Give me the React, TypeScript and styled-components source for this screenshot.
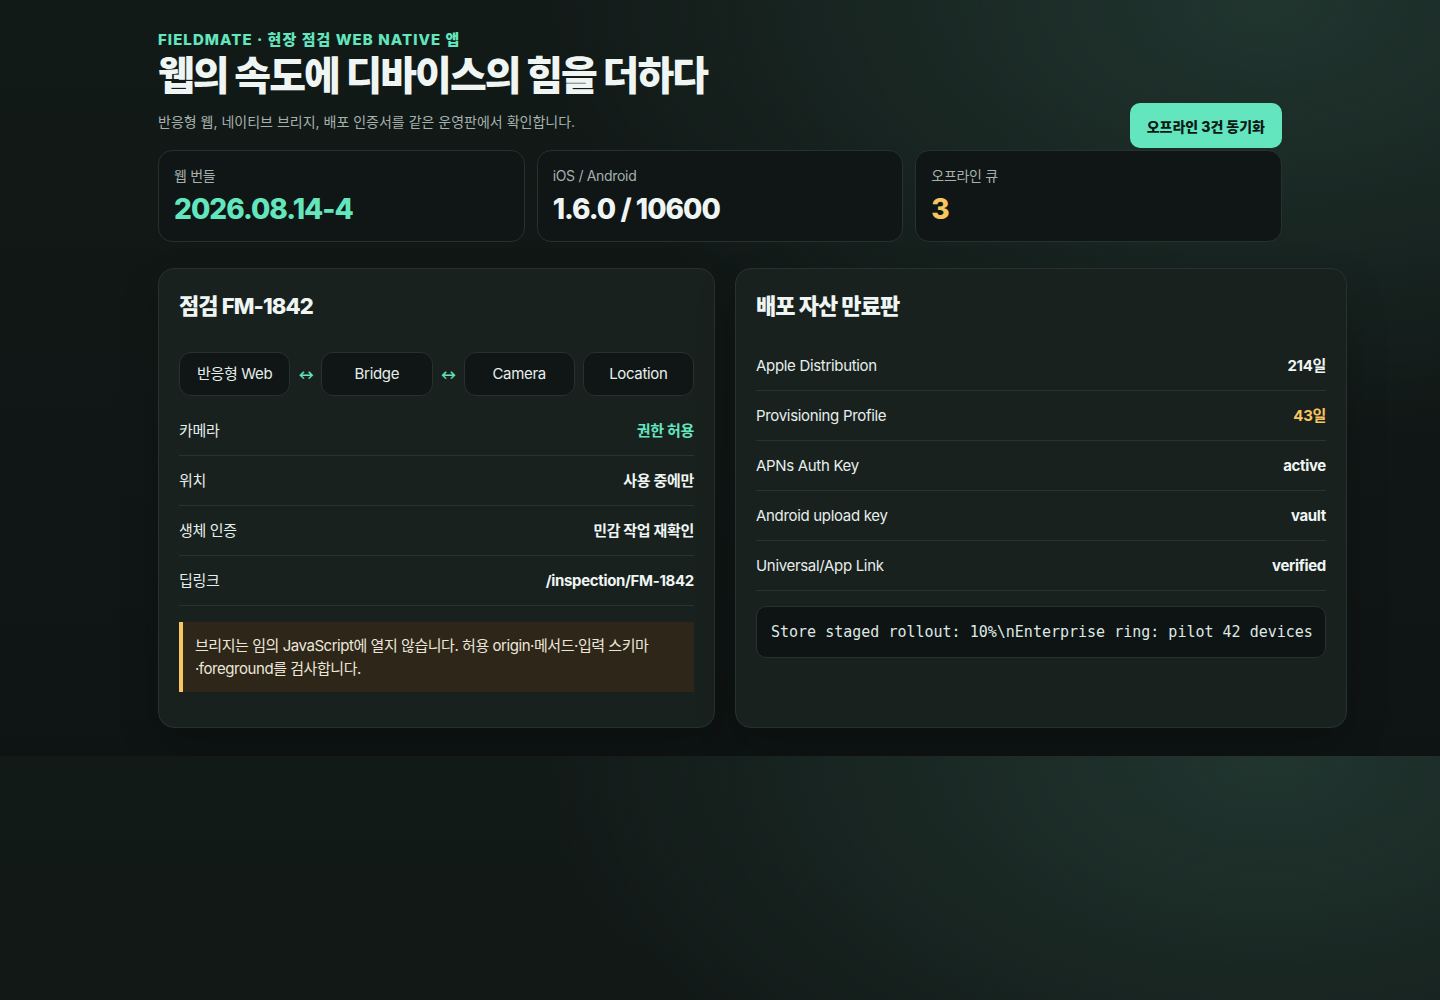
import React from 'react';
import styled, { createGlobalStyle } from 'styled-components';

const GlobalStyle = createGlobalStyle`
  body {
    margin: 0;
    background:
      radial-gradient(ellipse 1000px 620px at 88% 0%, #21352f 0%, rgba(33, 53, 47, 0) 72%),
      linear-gradient(180deg, #121a18 0%, #0e1413 100%);
    color: #e9f1ef;
    font-family: Inter, "Noto Sans CJK KR", sans-serif;
    letter-spacing: -0.02em;
  }
  * {
    box-sizing: border-box;
  }
`;

const Page = styled.div`
  max-width: 1124px;
  margin: 0 auto;
  padding: 30px 0 28px;
  display: flex;
  flex-direction: column;
`;

const Header = styled.header`
  display: flex;
  justify-content: space-between;
  align-items: flex-end;
`;

const Intro = styled.div`
  display: flex;
  flex-direction: column;
`;

const Eyebrow = styled.span`
  font-size: 15px;
  line-height: 20px;
  font-weight: 800;
  letter-spacing: 0.07em;
  color: #63e6be;
`;

const Title = styled.h1`
  margin: 3px 0 0;
  font-size: 40px;
  line-height: 46px;
  font-weight: 800;
  letter-spacing: -0.05em;
  color: #eef5f3;
`;

const Subtitle = styled.p`
  margin: 13px 0 16px;
  font-size: 14px;
  line-height: 20px;
  letter-spacing: 0;
  color: #a6b1ae;
`;

const SyncButton = styled.button`
  height: 45px;
  padding: 0 17px;
  border: none;
  border-radius: 10px;
  background: #63e6be;
  color: #0c1a16;
  font-family: inherit;
  font-size: 14px;
  font-weight: 800;
  letter-spacing: 0;
  cursor: pointer;
`;

const Stats = styled.section`
  margin-top: 2px;
  display: grid;
  grid-template-columns: repeat(3, 1fr);
  gap: 12px;
`;

const StatCard = styled.div`
  display: flex;
  flex-direction: column;
  gap: 6px;
  padding: 15px;
  border: 1px solid #27312f;
  border-radius: 14px;
  background: #0f1615;
`;

const StatLabel = styled.span`
  font-size: 14px;
  line-height: 20px;
  color: #a6b1ae;
`;

const StatValue = styled.span<{ $tone?: 'green' | 'yellow' }>`
  font-size: 28px;
  line-height: 34px;
  font-weight: 800;
  letter-spacing: -0.035em;
  color: ${({ $tone }) =>
    $tone === 'green' ? '#63e6be' : $tone === 'yellow' ? '#f7c65f' : '#eef5f3'};
`;

const Panels = styled.section`
  margin-top: 26px;
  display: grid;
  grid-template-columns: 557px 612px;
  gap: 20px;
  align-items: stretch;
`;

const Panel = styled.div`
  display: flex;
  flex-direction: column;
  padding: 20px 20px 35px;
  border: 1px solid #27322f;
  border-radius: 16px;
  background: #19211f;
  box-shadow: 0 18px 40px rgba(0, 0, 0, 0.18);
`;

const PanelTitle = styled.h2`
  margin: 0 0 18px;
  font-size: 22px;
  line-height: 34px;
  font-weight: 800;
  letter-spacing: -0.04em;
  color: #eef5f3;
`;

const Flow = styled.div`
  display: flex;
  align-items: center;
  gap: 8px;
  margin: 11px 0 10px;
`;

const Chip = styled.div`
  flex: 1 1 0;
  padding: 10px 0;
  text-align: center;
  font-size: 15px;
  line-height: 22px;
  color: #e6eeec;
  border: 1px solid #27312f;
  border-radius: 12px;
  background: #0f1615;
`;

const Arrow = styled.span`
  width: 15px;
  text-align: center;
  font-size: 12px;
  font-weight: 700;
  color: #63e6be;
`;

const Row = styled.div`
  display: flex;
  justify-content: space-between;
  align-items: center;
  padding: 14px 0;
  border-bottom: 1px solid #28332f;
  font-size: 15px;
  line-height: 21px;
`;

const RowLabel = styled.span`
  color: #e6eeec;
`;

const RowValue = styled.span<{ $tone?: 'green' | 'yellow' }>`
  font-weight: 700;
  color: ${({ $tone }) =>
    $tone === 'green' ? '#63e6be' : $tone === 'yellow' ? '#f7c65f' : '#eef5f3'};
`;

const Callout = styled.div`
  margin-top: 16px;
  padding: 12px 16px 12px 12px;
  border-left: 4px solid #f7c65f;
  background: #2e2619;
  font-size: 15px;
  line-height: 23px;
  letter-spacing: -0.03em;
  color: #ece6da;
`;

const Code = styled.pre`
  margin: 15px 0 0;
  padding: 15px 14px;
  border: 1px solid #27312f;
  border-radius: 10px;
  background: #0e1413;
  font-family: "DejaVu Sans Mono", "Liberation Mono", monospace;
  font-size: 15px;
  line-height: 20px;
  letter-spacing: 0;
  color: #dfe8e5;
  white-space: pre;
`;

const permissions = [
  { label: '카메라', value: '권한 허용', tone: 'green' as const },
  { label: '위치', value: '사용 중에만' },
  { label: '생체 인증', value: '민감 작업 재확인' },
  { label: '딥링크', value: '/inspection/FM-1842' },
];

const assets = [
  { label: 'Apple Distribution', value: '214일' },
  { label: 'Provisioning Profile', value: '43일', tone: 'yellow' as const },
  { label: 'APNs Auth Key', value: 'active' },
  { label: 'Android upload key', value: 'vault' },
  { label: 'Universal/App Link', value: 'verified' },
];

const App = () => {
  return (
    <>
      <GlobalStyle />
      <Page>
        <Header>
          <Intro>
            <Eyebrow>FIELDMATE · 현장 점검 WEB NATIVE 앱</Eyebrow>
            <Title>웹의 속도에 디바이스의 힘을 더하다</Title>
            <Subtitle>반응형 웹, 네이티브 브리지, 배포 인증서를 같은 운영판에서 확인합니다.</Subtitle>
          </Intro>
          <SyncButton>오프라인 3건 동기화</SyncButton>
        </Header>

        <Stats>
          <StatCard>
            <StatLabel>웹 번들</StatLabel>
            <StatValue $tone="green">2026.08.14-4</StatValue>
          </StatCard>
          <StatCard>
            <StatLabel>iOS / Android</StatLabel>
            <StatValue>1.6.0 / 10600</StatValue>
          </StatCard>
          <StatCard>
            <StatLabel>오프라인 큐</StatLabel>
            <StatValue $tone="yellow">3</StatValue>
          </StatCard>
        </Stats>

        <Panels>
          <Panel>
            <PanelTitle>점검 FM-1842</PanelTitle>
            <Flow>
              <Chip>반응형 Web</Chip>
              <Arrow>↔</Arrow>
              <Chip>Bridge</Chip>
              <Arrow>↔</Arrow>
              <Chip>Camera</Chip>
              <Chip>Location</Chip>
            </Flow>
            {permissions.map((p) => (
              <Row key={p.label}>
                <RowLabel>{p.label}</RowLabel>
                <RowValue $tone={p.tone}>{p.value}</RowValue>
              </Row>
            ))}
            <Callout>
              브리지는 임의 JavaScript에 열지 않습니다. 허용 origin·메서드·입력 스키마
              ·foreground를 검사합니다.
            </Callout>
          </Panel>

          <Panel>
            <PanelTitle>배포 자산 만료판</PanelTitle>
            {assets.map((a) => (
              <Row key={a.label}>
                <RowLabel>{a.label}</RowLabel>
                <RowValue $tone={a.tone}>{a.value}</RowValue>
              </Row>
            ))}
            <Code>{'Store staged rollout: 10%\\nEnterprise ring: pilot 42 devices'}</Code>
          </Panel>
        </Panels>
      </Page>
    </>
  );
};

export default App;
